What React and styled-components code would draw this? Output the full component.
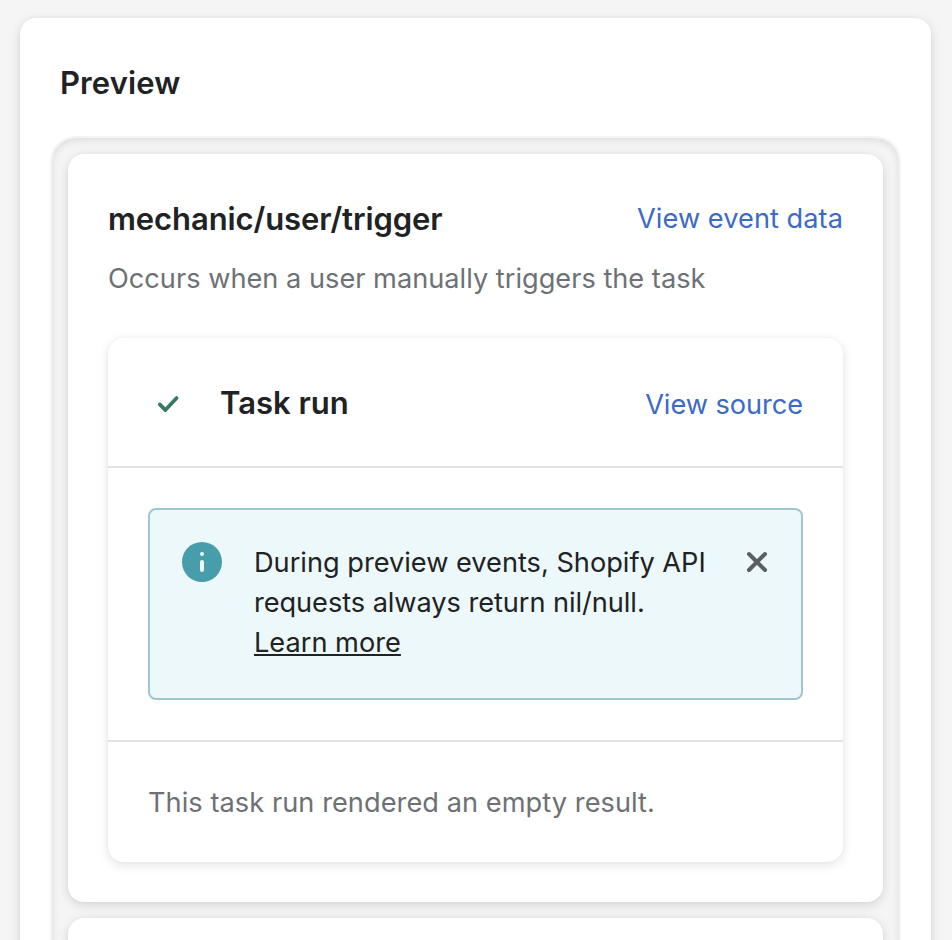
import React from 'react';
import styled, { createGlobalStyle } from 'styled-components';

const GlobalStyle = createGlobalStyle`
  html, body { margin: 0; padding: 0; background: #f5f5f5; }
  body { height: 940px; overflow: hidden; }
  * { box-sizing: border-box; }
`;

const Page = styled.main`
  height: 940px;
  padding: 18px 21px 0 20px;
  overflow: hidden;
  background: #f5f5f5;
  color: #202223;
  font-family: Inter, "Liberation Sans", sans-serif;
  font-size: 27.2px;
  line-height: 40px;
`;

const Card = styled.section`
  background: #fff;
  border-radius: 16px;
  box-shadow: 0 0 4px rgba(23, 24, 24, 0.03), 0 3px 12px rgba(0, 0, 0, ${(p) => p.$depth || 0.13});
`;

const PreviewCard = styled(Card)`
  height: 1100px;
  padding: 41px 30px 0;
`;

const Heading = styled.h2`
  margin: 0;
  font-size: 31px;
  line-height: 48px;
  font-weight: 600;
  letter-spacing: ${(p) => p.$tracking || 0}px;
  white-space: nowrap;
`;

const PreviewTitle = styled(Heading)`
  padding-left: 10px;
`;

const Well = styled.div`
  display: flex;
  flex-direction: column;
  gap: 16px;
  height: 1000px;
  margin-top: 29px;
  padding: 16px;
  border: 2px solid #f4f4f4;
  border-radius: 26px;
  background: #f5f5f5;
  box-shadow: inset 0 2px 8px rgba(0, 0, 0, 0.11);
`;

const EventCard = styled(Card)`
  height: 748px;
  flex: none;
  padding: 41px 40px 0;
`;

const Row = styled.header`
  display: flex;
  align-items: center;
  justify-content: space-between;
`;

const Text = styled.p`
  margin: 0;
  white-space: nowrap;
  letter-spacing: ${(p) => p.$tracking || 0}px;
  color: ${(p) => (p.$subdued ? '#6d7175' : '#202223')};
`;

const Description = styled(Text)`
  margin: 16px 0 39px;
`;

const Link = styled.a`
  color: #3c6ac6;
  white-space: nowrap;
  letter-spacing: ${(p) => p.$tracking || 0}px;
`;

const RunHeader = styled(Row)`
  height: 130px;
  padding: 6px 40px 0;
  border-bottom: 2px solid #e1e2e3;
`;

const RunTitle = styled.div`
  display: flex;
  align-items: center;
  gap: 32px;
  margin-top: -4px;
`;

const RunBody = styled.div`
  padding: 40px;
  border-bottom: 2px solid #e1e2e3;
`;

const RunFooter = styled.footer`
  padding: 41px 40px 39px;
`;

const Banner = styled.aside`
  display: flex;
  align-items: flex-start;
  height: 192px;
  padding: 32px;
  border: 2px solid #9fc6ce;
  border-radius: 8px;
  background: #edf8fb;
`;

const Message = styled.div`
  flex: 1;
  margin: 1px 0 0 32px;
`;

const LearnMore = styled.a`
  text-decoration: underline;
  text-decoration-thickness: 2px;
  text-underline-offset: 2px;
  text-decoration-skip-ink: none;
`;

const CloseButton = styled.button`
  display: flex;
  margin: 8px 0 0;
  padding: 0;
  border: 0;
  background: none;
`;

const CheckIcon = () => (
  <svg width="40" height="40" viewBox="0 0 40 40" fill="none">
    <path d="M11.8 21.4l5.6 5.7L28.6 15" stroke="#347c60" strokeWidth="3.7" strokeLinecap="round" strokeLinejoin="round" />
  </svg>
);

const InfoIcon = () => (
  <svg width="40" height="40" viewBox="0 0 40 40">
    <circle cx="20" cy="20" r="20" fill="#489dab" />
    <circle cx="20" cy="12" r="2" fill="#edf8fb" />
    <rect x="18" y="18" width="4" height="12" rx="2" fill="#edf8fb" />
  </svg>
);

const CloseIcon = () => (
  <svg width="24" height="24" viewBox="0 0 24 24" fill="none">
    <path d="M4 4l16 16M20 4L4 20" stroke="#5b5e62" strokeWidth="4" strokeLinecap="round" />
  </svg>
);

export default function App() {
  return (
    <>
      <GlobalStyle />
      <Page>
        <PreviewCard>
          <PreviewTitle $tracking={0.1}>Preview</PreviewTitle>
          <Well>
            <EventCard>
              <Row>
                <Heading $tracking={-0.09}>mechanic/user/trigger</Heading>
                <Link $tracking={0.04}>View event data</Link>
              </Row>
              <Description $subdued>Occurs when a user manually triggers the task</Description>
              <Card $depth={0.11}>
                <RunHeader>
                  <RunTitle>
                    <CheckIcon />
                    <Heading>Task run</Heading>
                  </RunTitle>
                  <Link $tracking={-0.06}>View source</Link>
                </RunHeader>
                <RunBody>
                  <Banner>
                    <InfoIcon />
                    <Message>
                      <Text $tracking={-0.01}>During preview events, Shopify API</Text>
                      <Text $tracking={-0.06}>requests always return nil/null.</Text>
                      <Text><LearnMore>Learn more</LearnMore></Text>
                    </Message>
                    <CloseButton aria-label="Dismiss"><CloseIcon /></CloseButton>
                  </Banner>
                </RunBody>
                <RunFooter>
                  <Text $subdued $tracking={0.05}>This task run rendered an empty result.</Text>
                </RunFooter>
              </Card>
            </EventCard>
            <EventCard />
          </Well>
        </PreviewCard>
      </Page>
    </>
  );
}
